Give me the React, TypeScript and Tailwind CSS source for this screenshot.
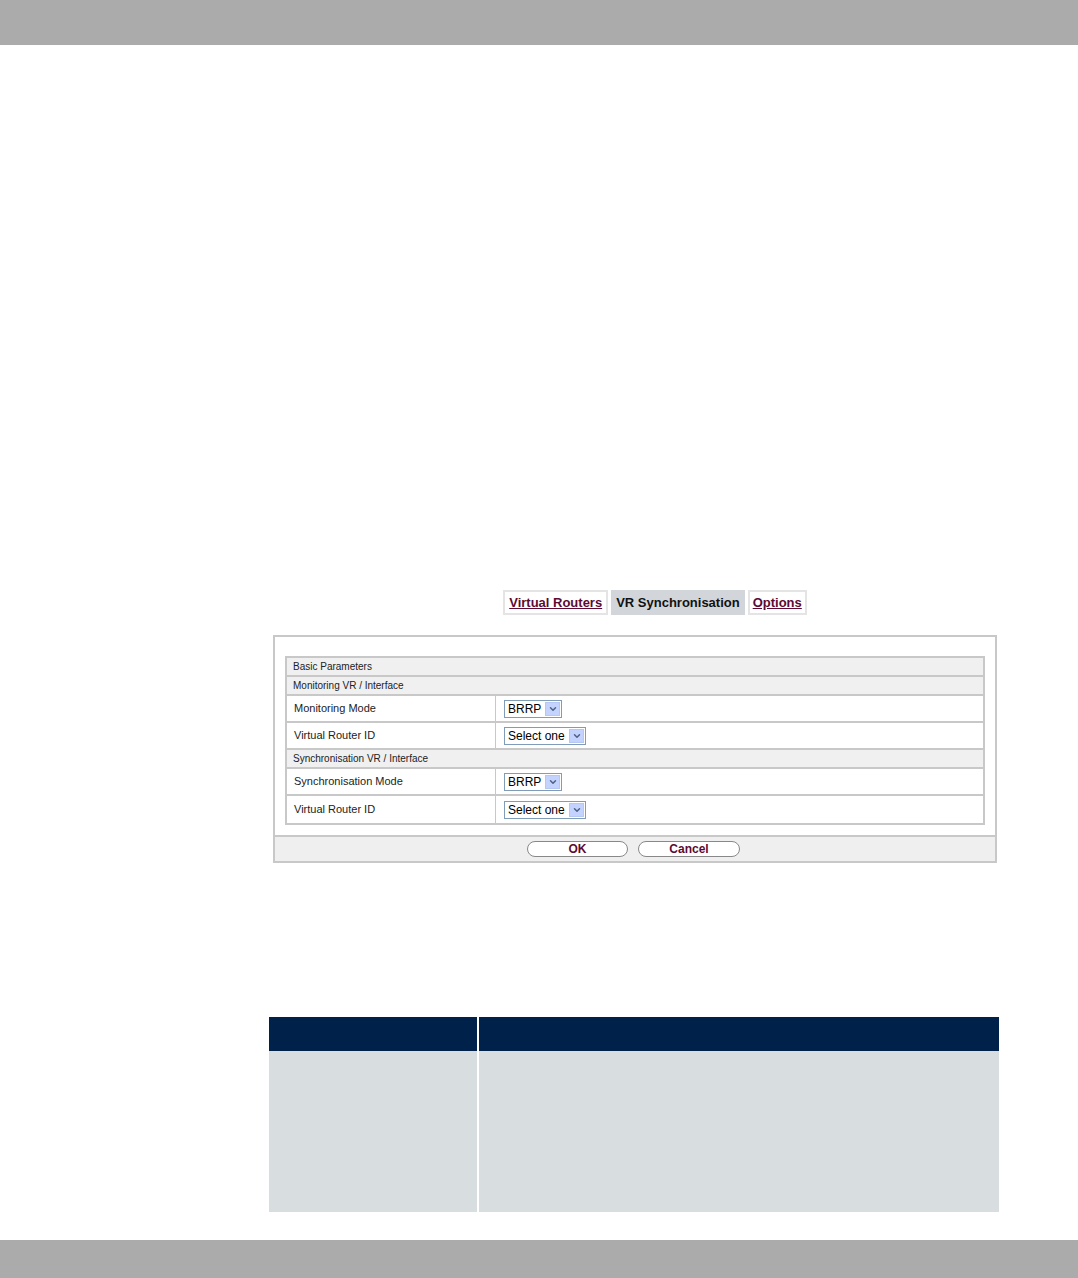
import { ChevronDown } from 'lucide-react';

const font = { fontFamily: '"Liberation Sans", Arial, sans-serif' };

function FakeSelect({ value, width }: { value: string; width: string }) {
  return (
    <div className={`flex items-center h-[18px] border border-[#7f9db9] bg-white ${width}`}>
      <span className="flex-1 pl-[3px] text-[12px] leading-none text-black">{value}</span>
      <span className="mr-[1px] flex h-[14px] w-[15px] items-center justify-center bg-[#c3d3fd] border border-[#b5c7f2]">
        <ChevronDown className="h-[10px] w-[10px] text-[#4d6185]" strokeWidth={3.5} />
      </span>
    </div>
  );
}

function SectionRow({ label }: { label: string }) {
  return (
    <div className="flex h-[19px] items-center bg-[#f0f0f0] px-[6px] text-[10px] text-[#222] border-b-2 border-[#c8c8c8]">
      {label}
    </div>
  );
}

function FieldRow({ label, value, width }: { label: string; value: string; width: string }) {
  return (
    <div className="flex h-[27px] border-b-2 border-[#c8c8c8] last:border-b-0">
      <div className="flex w-[209px] items-center border-r border-[#c8c8c8] pl-[7px] text-[11px] text-[#222]">{label}</div>
      <div className="flex flex-1 items-center pl-[8px]">
        <FakeSelect value={value} width={width} />
      </div>
    </div>
  );
}

export default function App() {
  return (
    <div className="flex min-h-[1278px] w-[1078px] flex-col bg-white" style={font}>
      <div className="h-[45px] bg-[#ababab]" />

      <div className="flex flex-1 flex-col">
        <div className="mt-[545px] flex justify-center gap-[3px] pl-[232px]">
          <div className="flex h-[25px] items-center border-2 border-[#e4e4e4] px-[4px] text-[13px] font-bold text-[#5c0a33] underline">
            Virtual Routers
          </div>
          <div className="flex h-[25px] items-center bg-[#d2d6da] px-[5px] text-[13px] font-bold text-[#111]">
            VR Synchronisation
          </div>
          <div className="flex h-[25px] items-center border-2 border-[#e4e4e4] px-[3px] text-[13px] font-bold text-[#5c0a33] underline">
            Options
          </div>
        </div>

        <div className="ml-[273px] mt-[20px] w-[724px] border-2 border-[#c8c8c8]">
          <div className="px-[10px] pb-[10px] pt-[19px]">
            <div className="border-2 border-[#c8c8c8]">
              <SectionRow label="Basic Parameters" />
              <SectionRow label="Monitoring VR / Interface" />
              <FieldRow label="Monitoring Mode" value="BRRP" width="w-[58px]" />
              <FieldRow label="Virtual Router ID" value="Select one" width="w-[82px]" />
              <SectionRow label="Synchronisation VR / Interface" />
              <FieldRow label="Synchronisation Mode" value="BRRP" width="w-[58px]" />
              <FieldRow label="Virtual Router ID" value="Select one" width="w-[82px]" />
            </div>
          </div>
          <div className="flex h-[26px] items-center justify-center gap-[10px] border-t-2 border-[#c8c8c8] bg-[#efefef] pr-[3px]">
            <button className="h-[16px] w-[101px] rounded-full border border-[#888] bg-white text-[12px] font-bold leading-none text-[#5c0a33]">
              OK
            </button>
            <button className="h-[16px] w-[102px] rounded-full border border-[#888] bg-white text-[12px] font-bold leading-none text-[#5c0a33]">
              Cancel
            </button>
          </div>
        </div>

        <div className="ml-[269px] mt-[154px] w-[730px]">
          <div className="flex h-[34px] bg-[#00214a]">
            <div className="w-[208px]" />
            <div className="w-[2px] bg-white" />
            <div className="flex-1" />
          </div>
          <div className="flex h-[161px] bg-[#d8dde0]">
            <div className="w-[208px]" />
            <div className="w-[2px] bg-white" />
            <div className="flex-1" />
          </div>
        </div>

        <div className="flex-1" />
      </div>

      <div className="h-[38px] bg-[#ababab]" />
    </div>
  );
}
